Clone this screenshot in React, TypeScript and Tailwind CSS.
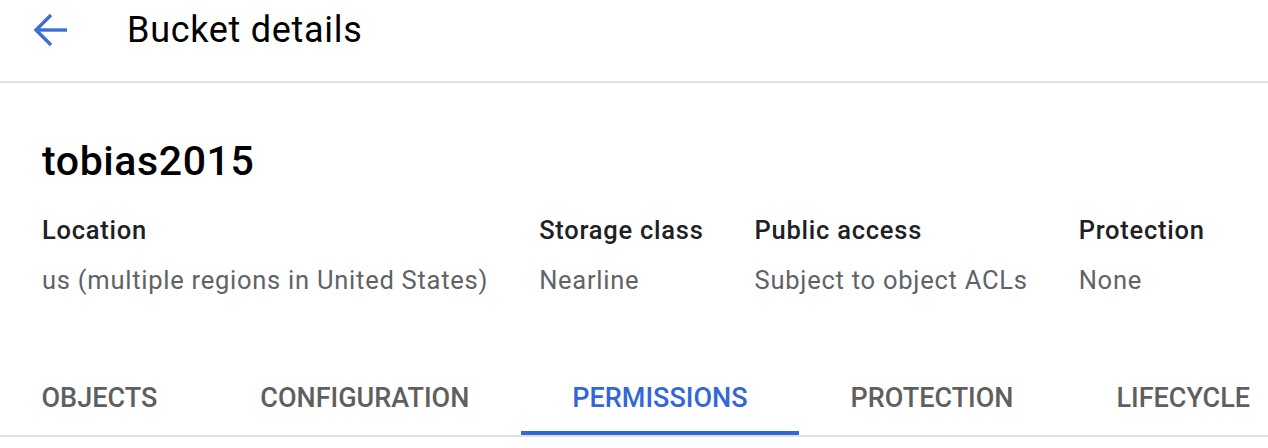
import React from "react"

const details = [
  { label: "Location", value: "us (multiple regions in United States)" },
  { label: "Storage class", value: "Nearline" },
  { label: "Public access", value: "Subject to object ACLs" },
  { label: "Protection", value: "None" },
]

const tabs = ["OBJECTS", "CONFIGURATION", "PERMISSIONS", "PROTECTION", "LIFECYCLE"]
const activeTab = "PERMISSIONS"

const BackArrow = () => (
  <svg width="36" height="36" viewBox="0 0 36 36" fill="none" stroke="#3b6fd6" strokeWidth="3.4" strokeLinecap="butt">
    <path d="M35 18H4" />
    <path d="M19 3L4 18l15 15" />
  </svg>
)

export default function App() {
  return (
    <div className="w-full h-[448px] overflow-hidden bg-white text-black font-['Roboto',_'Liberation_Sans',_sans-serif]">
      {/* ヘッダー */}
      <header className="h-[83px] flex items-start border-b-2 border-[#e0e0e0]">
        <button className="ml-[32px] mt-[12px] flex items-center">
          <BackArrow />
        </button>
        <h1 className="ml-[59px] mt-[8px] text-[36px] leading-[44px] font-normal tracking-[0.7px]">Bucket details</h1>
      </header>

      <section className="px-[42px]">
        <h2 className="mt-[54px] text-[41px] leading-[48px] font-medium tracking-[0.6px]">tobias2015</h2>

        <div className="mt-[29px] flex gap-[51px]">
          {details.map((d) => (
            <div key={d.label} className="flex flex-col">
              <span className="text-[25.5px] leading-[32px] font-medium tracking-[0.75px] text-[#202124]">{d.label}</span>
              <span className="mt-[18px] text-[25.5px] leading-[32px] tracking-[0.75px] text-[#5f6368]">{d.value}</span>
            </div>
          ))}
        </div>
      </section>

      {/* タブ */}
      <nav className="mt-[86px] flex border-b-2 border-[#e0e0e0]">
        <div className="flex ml-[-10px] shrink-0">
          {tabs.map((t) => (
            <div
              key={t}
              className={`px-[51.5px] pb-[17px] border-b-4 text-[27px] leading-[32px] font-medium whitespace-nowrap ${
                t === activeTab ? "border-[#3367d6] text-[#3367d6]" : "border-transparent text-[#5f5f5f]"
              }`}
            >
              {t}
            </div>
          ))}
        </div>
      </nav>
    </div>
  )
}
